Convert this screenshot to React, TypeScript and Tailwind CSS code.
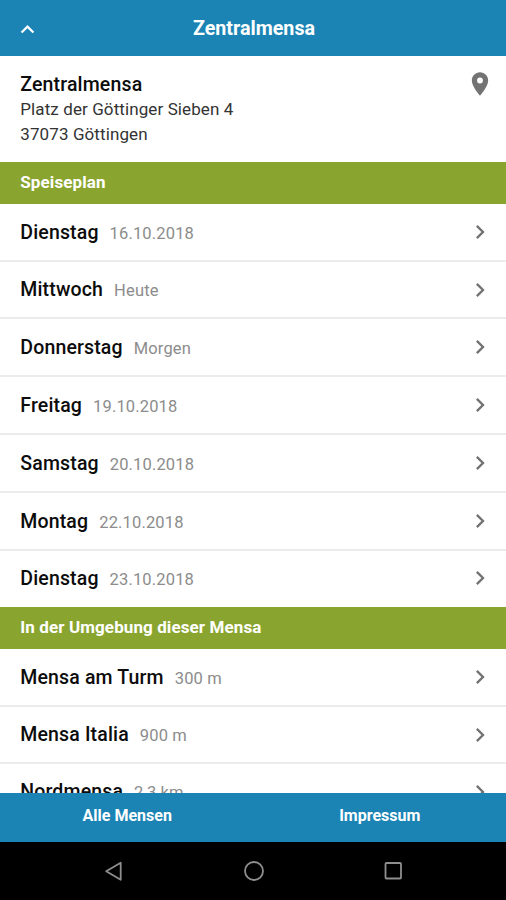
import { MdChevronRight, MdKeyboardArrowUp, MdLocationOn } from 'react-icons/md';

interface Entry {
    title: string;
    note: string;
}

const days: Entry[] = [
    { title: 'Dienstag', note: '16.10.2018' },
    { title: 'Mittwoch', note: 'Heute' },
    { title: 'Donnerstag', note: 'Morgen' },
    { title: 'Freitag', note: '19.10.2018' },
    { title: 'Samstag', note: '20.10.2018' },
    { title: 'Montag', note: '22.10.2018' },
    { title: 'Dienstag', note: '23.10.2018' },
];

const nearby: Entry[] = [
    { title: 'Mensa am Turm', note: '300 m' },
    { title: 'Mensa Italia', note: '900 m' },
    { title: 'Nordmensa', note: '2,3 km' },
];

function SectionTitle({ children }: { children: string }) {
    return (
        <h2 className="flex h-[41.9px] shrink-0 items-center bg-[#8aa52f] pb-px pl-[20.3px] text-[17px] font-bold tracking-[0.1px] text-white">
            {children}
        </h2>
    );
}

function EntryList({ entries }: { entries: Entry[] }) {
    return (
        <ul className="shrink-0">
            {entries.map((entry, i) => (
                <li
                    key={i}
                    className="flex h-[57.8px] items-center border-b-2 border-[#ebebeb] pl-[20.3px] pr-3 last:h-[56.3px] last:border-transparent"
                >
                    <div className="flex flex-1 items-baseline gap-[11px] pt-px">
                        <span className="text-[19.5px] font-medium tracking-[0.15px] text-[#0c0c0c]">
                            {entry.title}
                        </span>
                        <span className="text-[16.5px] tracking-[0.15px] text-[#8c8c8c]">{entry.note}</span>
                    </div>
                    <MdChevronRight className="size-7 text-[#737373]" />
                </li>
            ))}
        </ul>
    );
}

export default function App() {
    return (
        <div className="flex h-[900px] w-[506px] flex-col overflow-hidden bg-white font-[Roboto,sans-serif]">
            <header className="grid h-14 shrink-0 grid-cols-[56px_1fr_56px] items-center bg-[#1b84b5] text-white">
                <button className="pl-[14px] pt-0.5">
                    <MdKeyboardArrowUp className="size-[27px]" />
                </button>
                <h1 className="pl-0.5 pt-0.5 text-center text-[19.7px] font-bold">Zentralmensa</h1>
            </header>

            <main className="flex min-h-0 flex-1 flex-col overflow-hidden">
                <div className="flex h-[106px] shrink-0 items-start justify-between pl-[20.3px] pr-3 pt-[15px]">
                    <div>
                        <p className="pt-px text-[19.5px] font-medium leading-[25px] tracking-[0.15px] text-[#0c0c0c]">
                            Zentralmensa
                        </p>
                        <p className="text-[17px] leading-[25px] tracking-[0.1px] text-[#333]">
                            Platz der Göttinger Sieben 4
                        </p>
                        <p className="text-[17px] leading-[25px] tracking-[0.1px] text-[#333]">37073 Göttingen</p>
                    </div>
                    <MdLocationOn className="-mt-px size-7 text-[#737373]" />
                </div>
                <SectionTitle>Speiseplan</SectionTitle>
                <EntryList entries={days} />
                <SectionTitle>In der Umgebung dieser Mensa</SectionTitle>
                <EntryList entries={nearby} />
            </main>

            <footer className="grid h-[49px] shrink-0 grid-cols-2 items-center bg-[#1b84b5] pb-[3px] pl-px text-center text-[16px] font-bold text-white">
                <a>Alle Mensen</a>
                <a>Impressum</a>
            </footer>

            {/* Android navigation bar */}
            <nav className="flex h-[58px] shrink-0 items-center justify-center gap-[116px] bg-black pl-px">
                <svg viewBox="0 0 24 24" className="size-6" fill="none" stroke="#8e8e8e" strokeWidth="1.8">
                    <path d="M18.7 3.8v17L4.2 12.3z" strokeLinejoin="round" />
                </svg>
                <svg viewBox="0 0 24 24" className="size-6" fill="none" stroke="#8e8e8e" strokeWidth="1.8">
                    <circle cx="12" cy="12" r="9" />
                </svg>
                <svg viewBox="0 0 24 24" className="size-6" fill="none" stroke="#8e8e8e" strokeWidth="1.8">
                    <rect x="3.5" y="4" width="15.5" height="15.5" rx="1" />
                </svg>
            </nav>
        </div>
    );
}
